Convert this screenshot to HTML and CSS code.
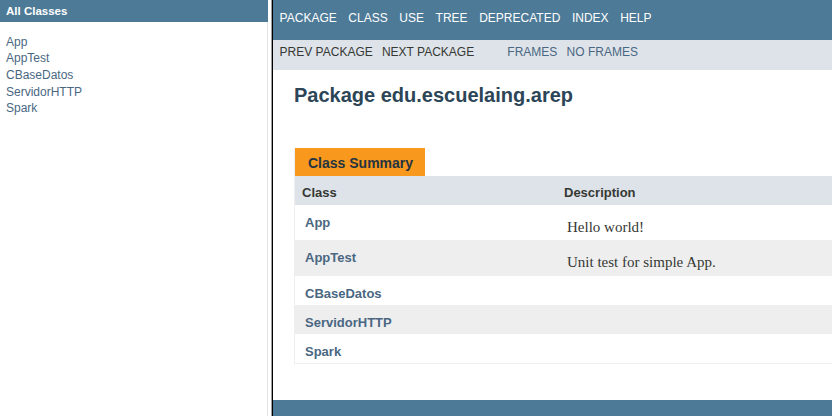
FILE: index.html
```html
<!DOCTYPE html>
<html lang="en">
<head>
<meta charset="utf-8">
<title>edu.escuelaing.arep</title>
<link rel="stylesheet" href="styles.css">
</head>
<body>
<div class="frameset">
  <div class="left-frame">
    <div class="all-classes">All Classes</div>
    <ul class="class-list">
      <li><a href="#">App</a></li>
      <li><a href="#">AppTest</a></li>
      <li><a href="#">CBaseDatos</a></li>
      <li><a href="#">ServidorHTTP</a></li>
      <li><a href="#">Spark</a></li>
    </ul>
  </div>
  <div class="divider"><span class="edge-gray"></span><span class="edge-black"></span></div>
  <div class="right-frame">
    <ul class="top-nav">
      <li>Package</li>
      <li>Class</li>
      <li>Use</li>
      <li>Tree</li>
      <li>Deprecated</li>
      <li>Index</li>
      <li>Help</li>
    </ul>
    <div class="sub-nav">
      <ul class="nav-group">
        <li>Prev Package</li>
        <li>Next Package</li>
      </ul>
      <ul class="nav-group frames">
        <li><a href="#">Frames</a></li>
        <li><a href="#">No Frames</a></li>
      </ul>
    </div>
    <div class="content">
      <h1 class="title">Package edu.escuelaing.arep</h1>
      <div class="summary">
        <div class="caption">Class Summary</div>
        <table class="summary-table">
          <thead>
            <tr><th class="col-first">Class</th><th class="col-last">Description</th></tr>
          </thead>
          <tbody>
            <tr class="alt-a"><td class="col-first"><a href="#">App</a></td><td class="col-last"><div class="block">Hello world!</div></td></tr>
            <tr class="alt-b"><td class="col-first"><a href="#">AppTest</a></td><td class="col-last"><div class="block">Unit test for simple App.</div></td></tr>
            <tr class="alt-a"><td class="col-first"><a href="#">CBaseDatos</a></td><td class="col-last empty"></td></tr>
            <tr class="alt-b"><td class="col-first"><a href="#">ServidorHTTP</a></td><td class="col-last empty"></td></tr>
            <tr class="alt-a"><td class="col-first"><a href="#">Spark</a></td><td class="col-last empty"></td></tr>
          </tbody>
        </table>
      </div>
    </div>
    <div class="bottom-bar"></div>
  </div>
</div>
</body>
</html>
```

FILE: styles.css
```css
html, body {
  margin: 0;
  padding: 0;
  background: #ffffff;
}

body {
  font-family: "Liberation Sans", Arial, sans-serif;
  color: #353833;
}

a {
  color: #4A6782;
  text-decoration: none;
}

ul {
  list-style: none;
  margin: 0;
  padding: 0;
}

.frameset {
  display: flex;
  width: 832px;
  height: 416px;
  overflow: hidden;
}

/* left frame */
.left-frame {
  width: 268px;
  flex: 0 0 268px;
  display: flex;
  flex-direction: column;
}

.all-classes {
  height: 22px;
  box-sizing: border-box;
  padding: 4px 0 0 6px;
  background: #4D7A97;
  color: #ffffff;
  font-weight: bold;
  font-size: 11.5px;
  line-height: 14px;
}

.class-list {
  flex: 1;
  padding: 11.5px 0 0 6px;
  border-right: 1px solid #e4e4e4;
  font-size: 12px;
  line-height: 16.7px;
}

/* frame divider */
.divider {
  flex: 0 0 5px;
  display: flex;
  justify-content: flex-end;
}

.edge-gray {
  width: 1px;
  background: #a0a0a0;
}

.edge-black {
  width: 1px;
  background: #000000;
}

/* right frame */
.right-frame {
  flex: 1;
  min-width: 0;
  display: flex;
  flex-direction: column;
  overflow: hidden;
}

.top-nav {
  display: flex;
  height: 40px;
  box-sizing: border-box;
  padding: 11px 0 0 1px;
  background: #4D7A97;
  color: #ffffff;
  font-size: 12px;
  line-height: 14px;
  text-transform: uppercase;
}

.top-nav li {
  padding: 0 5.8px;
  white-space: nowrap;
}

.top-nav li:first-child {
  padding-left: 5.6px;
}

.nav-group li {
  padding: 0 4.6px;
  white-space: nowrap;
}

.nav-group li:first-child {
  padding-left: 5.6px;
}

.frames li:first-child {
  padding-left: 4.6px;
}

.sub-nav {
  display: flex;
  height: 30px;
  box-sizing: border-box;
  padding: 5px 0 0 1px;
  background: #dee3e9;
  font-size: 12px;
  line-height: 14px;
  text-transform: uppercase;
}

.nav-group {
  display: flex;
}

.frames {
  margin-left: 24px;
}

.content {
  flex: 1;
  padding: 0 0 0 21px;
  overflow: hidden;
}

.title {
  margin: 13px 0 0 0;
  font-size: 20px;
  line-height: 24px;
  font-weight: bold;
  color: #2c4557;
}

.summary {
  margin-top: 41px;
  width: 620px;
  border-left: 1px solid #eeeeee;
  border-bottom: 1px solid #eeeeee;
}

.caption {
  display: inline-block;
  height: 28px;
  box-sizing: border-box;
  padding: 6.5px 12px 0 13px;
  background: #F8981D;
  color: #253441;
  font-weight: bold;
  font-size: 14px;
  line-height: 16px;
  vertical-align: top;
}

.summary-table {
  width: 100%;
  border-collapse: collapse;
  border-spacing: 0;
  font-size: 13px;
  line-height: 15px;
}

.summary-table th {
  background: #dee3e9;
  text-align: left;
  font-weight: bold;
  color: #353833;
  height: 29px;
  box-sizing: border-box;
  padding: 9px 3px 5px 7px;
  vertical-align: top;
}

.summary-table th.col-first {
  width: 262px;
}

.summary-table td {
  vertical-align: top;
  padding: 0;
}

.summary-table td.col-first {
  padding: 10px 3px 4px 10px;
  font-weight: bold;
  white-space: nowrap;
}

.summary-table td.col-last {
  padding: 12.8px 3px 4.5px 10px;
}

.summary-table td.empty {
  padding: 0;
}

.block {
  font-family: "Liberation Serif", "Times New Roman", serif;
  font-size: 15px;
  line-height: 18px;
  color: #353833;
}

.alt-a {
  background: #ffffff;
}

.alt-b {
  background: #eeeeef;
}

.bottom-bar {
  flex: 0 0 16px;
  background: #4D7A97;
}
```
